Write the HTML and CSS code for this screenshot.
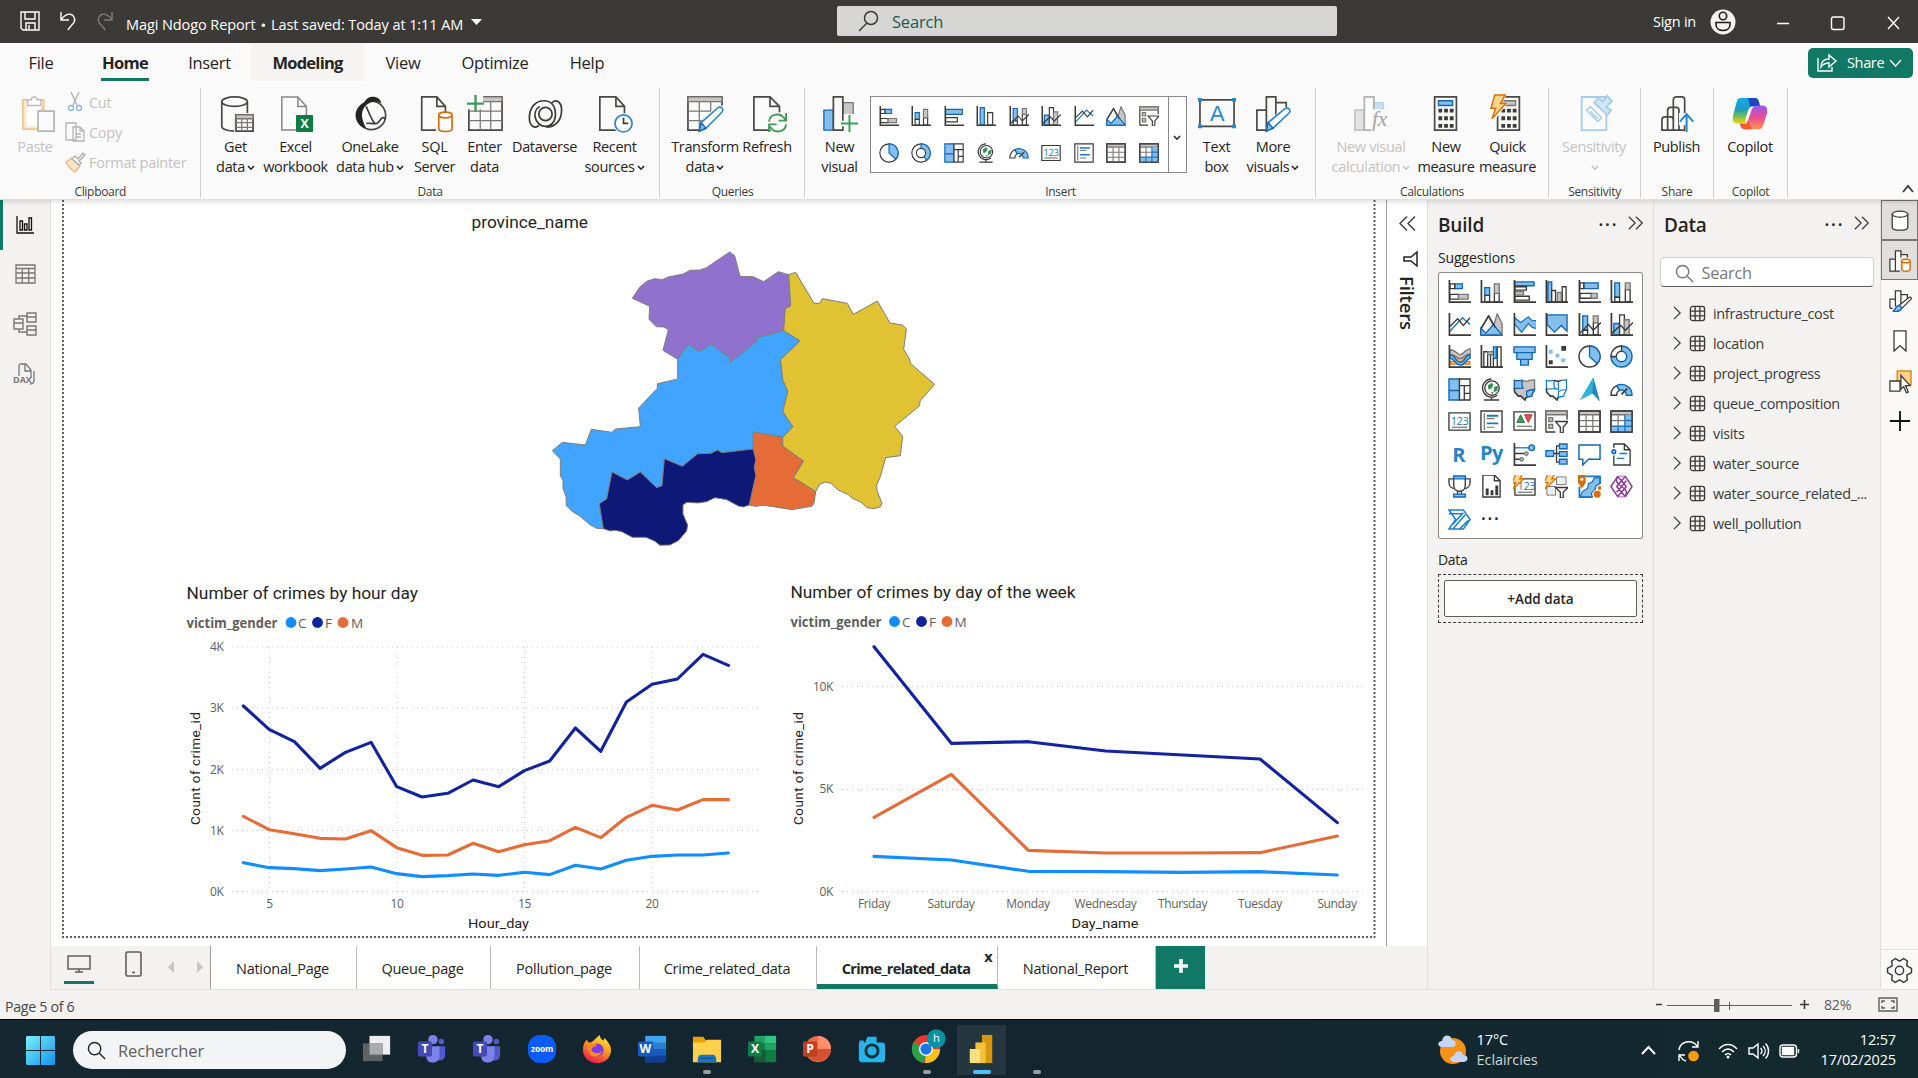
FILE: index.html
```html
<!DOCTYPE html>
<html lang="en">
<head>
<meta charset="utf-8">
<title>Magi Ndogo Report</title>
<link rel="stylesheet" href="styles.css">
</head>
<body>
<svg class="sprite" aria-hidden="true">
  <!-- visual gallery icons, 24 unit grid -->
  <symbol id="v-stackbar" viewBox="0 0 24 24"><path class="b" d="M7 4h8v5H7z"/><path class="w" d="M2 4h5v5H2zM2 15h9v5H2z"/><path class="g" d="M11 15h10v5H11z"/><path class="k2" d="M1.5 0v23H24"/></symbol>
  <symbol id="v-stackcol" viewBox="0 0 24 24"><path class="b" d="M5 8h5v8H5z"/><path class="w" d="M5 16h5v7H5zM15 14h5v9h-5z"/><path class="g" d="M15 4h5v10h-5z"/><path class="k2" d="M1.5 0v23H24"/></symbol>
  <symbol id="v-clubar" viewBox="0 0 24 24"><path class="b" d="M2 2h20v4H2z"/><path class="w" d="M2 7h12v3.500H2zM2 17h15v4H2z"/><path class="g" d="M2 12h9v3.500H2z"/><path class="k2" d="M1.5 0v23H24"/></symbol>
  <symbol id="v-clubar2" viewBox="0 0 24 24"><path class="b" d="M2 4h20v6H2z"/><path class="w" d="M2 14h14v5H2z"/><path class="k2" d="M1.5 0v23H24"/></symbol>
  <symbol id="v-clucol" viewBox="0 0 24 24"><path class="b" d="M3 2h4v21H3z"/><path class="w" d="M7 11h4v12H7zM18 7h4v16h-4z"/><path class="g" d="M13 13h4v10h-4z"/><path class="k2" d="M1.5 0v23H24"/></symbol>
  <symbol id="v-clucol2" viewBox="0 0 24 24"><path class="b" d="M5 2h5v21H5z"/><path class="w" d="M14 8h6v15h-6z"/><path class="k2" d="M1.5 0v23H24"/></symbol>
  <symbol id="v-100bar" viewBox="0 0 24 24"><path class="b" d="M6 3h15v6H6z"/><path class="w" d="M2 3h4v6H2zM2 14h12v5H2z"/><path class="g" d="M14 14h6v5h-6z"/><path class="k2" d="M1.5 0v23H24"/></symbol>
  <symbol id="v-100col" viewBox="0 0 24 24"><path class="b" d="M5 3h5v15H5z"/><path class="w" d="M5 18h5v5H5zM16 10h5v13h-5z"/><path class="g" d="M16 3h5v7h-5z"/><path class="k2" d="M1.5 0v23H24"/></symbol>
  <symbol id="v-line" viewBox="0 0 24 24"><path class="bl" d="M2 19 15 5l8 7"/><path class="k" d="m2 14 8-8 6 7 7-8"/><path class="k2" d="M1.5 0v23H24"/></symbol>
  <symbol id="v-area" viewBox="0 0 24 24"><path class="g" d="m18 1 5 10v12H11z"/><path class="w" d="M9 3 1 16v7h18z"/><path class="b" d="m1 16 5 5 8-9 9 11H1z"/><path class="k" d="M9 3 2 15M9 3l7 12"/></symbol>
  <symbol id="v-stackarea" viewBox="0 0 24 24"><path class="bs" d="m2 5 6 5 8-6 4 4h4v9l-4-2-4-4-7 9-7-8z"/><path class="b0" d="m2 5 6 5 8-6 4 4h4M2 12l7 8 7-9 4 4 4 1"/><path class="k2" d="M1.5 0v23H24"/></symbol>
  <symbol id="v-100area" viewBox="0 0 24 24"><path class="b" d="M2 2h21v17l-6-6-7 7-8-8z"/><path class="k2" d="M1.5 0v23H24"/></symbol>
  <symbol id="v-combo1" viewBox="0 0 24 24"><path class="b" d="M5 3h5v15H5z"/><path class="w" d="M5 18h5v5H5zM16 10h5v13h-5z"/><path class="g" d="M16 3h5v7h-5z"/><path class="k" d="m2 21 9-9 5 6 8-8"/><path class="k2" d="M1.5 0v23H24"/></symbol>
  <symbol id="v-combo2" viewBox="0 0 24 24"><path class="b" d="M4 11h6v12H4z"/><path class="w" d="M10 2h5v21h-5z"/><path class="g" d="M15 7h5v16h-5z"/><path class="k" d="m2 21 9-8 5 5 8-8"/><path class="k2" d="M1.5 0v23H24"/></symbol>
  <symbol id="v-ribbon" viewBox="0 0 24 24"><path class="o" d="M2 12h5l5 3 5-4h6v3h-5l-3 3h8v3H2v-3h6l-3-3H2z"/><path class="g" d="M2 5c7 0 7 5 11 5s4-6 11-6v5c-6 0-7 5-11 5S8 10 2 10z"/><path class="b" d="M2 10c5 0 6 8 11 8s5-8 10-8v4c-4 0-5 7-10 7S7 14 2 14z"/><path class="k2" d="M1.5 0v23H24"/></symbol>
  <symbol id="v-waterfall" viewBox="0 0 24 24"><path class="w" d="M4 7h4v16H4zM18 2h4v21h-4z"/><path class="g" d="M8 7h6v3H8z"/><path class="b" d="M14 2h3v12h-3z"/><path class="k" d="M11 10v13M14 14v9"/><path class="k2" d="M1.5 0v23H24"/></symbol>
  <symbol id="v-funnel" viewBox="0 0 24 24"><path class="b" d="M1 2h22v6H1zM4 8h16v7H4zM8 15h8v6H8z"/></symbol>
  <symbol id="v-scatter" viewBox="0 0 24 24"><path class="kd" d="M17 1h5v5h-5zM4 16h4v4H4z"/><path class="bs" d="M4 5h4v4H4zM11 9h4v4h-4zM17 14h4v4h-4z"/><path class="k2" d="M1.5 0v23H24"/></symbol>
  <symbol id="v-pie" viewBox="0 0 24 24"><circle class="w" cx="12" cy="12" r="11"/><path class="b" d="M12 1a11 11 0 0 1 8 18.500L12 12z"/></symbol>
  <symbol id="v-donut" viewBox="0 0 24 24"><path class="b" d="M12 1a11 11 0 1 1-11 11h5.500A5.500 5.500 0 1 0 12 6.500z"/><path class="w" d="M12 1A11 11 0 0 0 1 12h5.500A5.500 5.500 0 0 1 12 6.500z"/></symbol>
  <symbol id="v-donut2" viewBox="0 0 24 24"><circle class="w" cx="12" cy="12" r="11"/><path class="b" d="M12 1a11 11 0 0 1 7 19.500l-4-4.500A5.500 5.500 0 0 0 12 6.500z"/><circle class="w" cx="12" cy="12" r="5.500"/></symbol>
  <symbol id="v-treemap" viewBox="0 0 24 24"><path class="b" d="M1 1h11v22H1zM1 13h11"/><path class="w" d="M12 1h11v7H12zM12 8h5v15h-5zM17 8h6v8h-6zM17 16h6v7h-6z"/></symbol>
  <symbol id="v-map" viewBox="0 0 24 24"><circle class="w" cx="12.500" cy="10.500" r="7.500"/><path class="gn" d="M8 8l4-3 2 2-2 4-3 1zM15 9l4-1-1 5-4 2zM11 14l3 1-1 2z"/><path class="k" d="M12 1a9.500 9.500 0 1 0 6 17M12 20v3M4 23h16"/></symbol>
  <symbol id="v-filled" viewBox="0 0 24 24"><path class="g" d="M1.500 2.500c3 1 5 0 8 0 3 1 5 2 7 0l6-.500v10c-1 3-3 4-3 7l-5 1-2 3-4-4-4-1c-1-3-4-4-3-7z"/><path class="b" d="M1.500 2.500c3 1 5 0 8 0 0 3-1 5 1 8l-9 .500zM14 14c3-2 5-2 8.500-2-1 3-3 4-3 7l-5 1z"/><path class="k" d="M1.500 11v3c0 3 4 3 4 5l3 0 4 4 1-3"/></symbol>
  <symbol id="v-shape" viewBox="0 0 24 24"><path class="b0" fill="#fff" d="M1.500 2.500c3 1 5 0 8 0 3 1 5 2 7 0l6-.500v10c-1 3-3 4-3 7l-5 1-2 3-4-4-4-1c-1-3-4-4-3-7zM9.500 3c0 3-1 5 1 8l-9 .500M14 20v-6c3-2 5-2 8.500-2M10 11l4 1V3"/><path class="k" d="M1.500 11v3c0 3 4 3 4 5l3 0 4 4 1-3M9.500 2.500c3 1 5 2 7 0"/></symbol>
  <symbol id="v-azure" viewBox="0 0 24 24"><path d="M16-1 2 23l14-7z" fill="#32b0d8"/><path d="M16-1l7 26-8-9z" fill="#2287c7"/></symbol>
  <symbol id="v-gauge" viewBox="0 0 24 24"><path class="w" d="M1 18a11 11 0 0 1 6-10l3 5a5 5 0 0 0-3 5z"/><path class="b" d="M7 8a11 11 0 0 1 16 10h-6a5 5 0 0 0-7-5z"/><path class="k2" d="m12 17 6-6"/></symbol>
  <symbol id="v-card" viewBox="0 0 24 24"><path class="w" d="M1 3h22v18H1z"/><path class="gl" d="M4 18h16"/><text x="12" y="15.500" class="num">123</text></symbol>
  <symbol id="v-multirow" viewBox="0 0 24 24"><path class="w" d="M1 1h22v22H1z"/><path class="gl" d="M4.500 3v18M7 9h8M7 18h8"/><path class="bl2" d="M7 6h12M7 14h12"/></symbol>
  <symbol id="v-kpi" viewBox="0 0 24 24"><path class="w" d="M1 2h22v19H1z"/><path d="m4 13 4-8 4 8z" fill="#3f9c58" stroke="#2c7b43"/><path d="m12 5h8l-4 8z" fill="#e35252" stroke="#c03232"/><path class="gl" d="M4 17h16"/></symbol>
  <symbol id="v-slicer" viewBox="0 0 24 24"><path class="w" d="M1 1h22v22H1z"/><path class="g" d="M1 1h22v4H1zM4 8h4v4H4zM4 15h4v4H4z"/><path d="M10 10h15v15H11z" fill="#fff"/><path class="w" d="M11 12h13l-5 6v6h-3v-6z"/></symbol>
  <symbol id="v-table" viewBox="0 0 24 24"><path class="w" d="M1 1h22v22H1z"/><path class="g" d="M1 1h22v4H1z"/><path class="gl" d="M8.500 5v18M15.500 5v18M1 11h22M1 17h22"/><path class="k" d="M1 1h22v22H1z"/></symbol>
  <symbol id="v-matrix" viewBox="0 0 24 24"><path class="w" d="M1 1h22v22H1z"/><path class="g" d="M1 1h22v4H1z"/><path class="bs" d="M15.500 5H23v18H1v-6h14z"/><path class="bl" d="M8.500 16v7M15.500 5v18M15 11h8M1 17h22"/><path class="gl" d="M8.500 5v12M1 11h14"/><path class="k" d="M1 1h22v22H1z"/></symbol>
  <symbol id="v-r" viewBox="0 0 24 24"><text x="11" y="20" class="lang">R</text></symbol>
  <symbol id="v-py" viewBox="0 0 24 24"><text x="12" y="18" class="lang">Py</text></symbol>
  <symbol id="v-infl" viewBox="0 0 24 24"><path class="bl" d="M2 5h14"/><circle class="b" cx="19.500" cy="5" r="3"/><path class="k" d="M2 11h10M2 17h6"/><circle class="g" cx="14" cy="11" r="1.800"/><circle class="g" cx="9" cy="17" r="1.800"/><path class="k2" d="M1.500 0v23H24"/></symbol>
  <symbol id="v-decomp" viewBox="0 0 24 24"><path class="k" d="M9 11h6M16 3h-4v17h4"/><path class="b" d="M1 8h8v6H1zM15 1h8v5h-8zM15 9h8v5h-8zM15 17h8v5h-8z"/></symbol>
  <symbol id="v-qna" viewBox="0 0 24 24"><path d="M1 2h22v15H11l-6 6v-6H1z" fill="#fff" stroke="#1066b5" stroke-width="1.500"/></symbol>
  <symbol id="v-narr" viewBox="0 0 24 24"><path class="w" d="M4 1h11l6 6v16H4z"/><path class="k" d="M15 1v6h6"/><path class="bl" d="M10 11h8M7 16h8"/><circle cx="4" cy="9" r="4" fill="#fff"/><circle class="b" cx="4" cy="9" r="2"/></symbol>
  <symbol id="v-trophy" viewBox="0 0 24 24"><path class="w" d="M6 4H1v4c0 4 3 6 6 6l3 3v4h4v-4l3-3c3 0 6-2 6-6V4h-5"/><path class="w" d="M6 2h12v9c0 4-3 6-6 6s-6-2-6-6z"/><path class="b" d="M6 1h12v3H6zM6 20h12v3H6z"/></symbol>
  <symbol id="v-pagin" viewBox="0 0 24 24"><path class="w" d="M3 0h12l6 6v17H3z"/><path class="k" d="M15 0v6h6"/><path class="kd" d="M6 14h3v7H6zM11 16h3v5h-3zM16 11h3v10h-3z"/></symbol>
  <symbol id="v-cardnew" viewBox="0 0 24 24"><path class="w" d="M2 4h21v17H2z"/><path class="gl" d="M5 18h15"/><text x="14" y="16" class="num">123</text><path class="bolt" d="M3-1h7L7 4h4L0 15l3-7H-1z"/></symbol>
  <symbol id="v-slicernew" viewBox="0 0 24 24"><path d="M12 2h10v8H12zM2 12h9v9H2z" fill="#eee" stroke="#797775"/><path class="w" d="M11 13h13l-5 5v6h-3v-6z"/><path class="bolt" d="M3-1h7L7 4h4L0 15l3-7H-1z"/></symbol>
  <symbol id="v-arcgis" viewBox="0 0 24 24"><path d="M2 2h21v21H2z" fill="#fff"/><path d="M23 3h-6l-2 4-4 2-1 5-5 3-3 6h13l-1-4 4-4 1-4 4-2z" fill="#83beec" stroke="#1066b5" stroke-width="1.200"/><path class="bl2" d="M8 1.500h15v8M1.500 12v11H15"/><path d="M0 0h8v8l-4 6-4-6z" fill="#dd6b08"/><circle cx="4" cy="4.500" r="1.600" fill="#fff"/><circle cx="20" cy="20" r="4.200" fill="#dd6b08" stroke="#fff"/><circle cx="22.500" cy="13.500" r="2" fill="#dd6b08"/></symbol>
  <symbol id="v-papps" viewBox="0 0 24 24"><g fill="#fff" stroke="#8d3498" stroke-width="1.500" stroke-linejoin="round"><path d="M8 1.500h8L23 12l-7 10.500H8L1 12z"/><path d="m8 1.500 4 4.500 4-4.500M8 22.500l4-4.500 4 4.500M12 6l-5 6 5 6 5-6zM8 1.500C6 6 6 8 12 12M16 22.500c2-4.500 2-6.500-4-10.500M17 6l-10 12"/></g></symbol>
  <symbol id="v-pauto" viewBox="0 0 24 24"><path d="M1 2h15l7 10-7 10H1l7-10zM1 6h13M5 17 16 5M5 22 18 7M12 22l9-9" fill="#fff" stroke="#1b7fd4" stroke-width="1.600"/></symbol>
  <symbol id="i-table" viewBox="0 0 18 18"><rect class="k" x="1.500" y="1.500" width="15" height="15" rx="2.500"/><path class="k" d="M6.500 1.500v15M11.500 1.500v15M1.500 6.500h15M1.500 11.500h15"/></symbol>
  <symbol id="i-chev" viewBox="0 0 10 16"><path class="k" d="m1 1 7 7-7 7"/></symbol>
  <symbol id="i-dbl" viewBox="0 0 18 16"><path class="k" d="m1 1 7 7-7 7M9 1l7 7-7 7"/></symbol>
  <symbol id="i-down" viewBox="0 0 8 6"><path d="m1 1 3 3.200L7 1" fill="none" stroke="currentColor" stroke-width="1.600"/></symbol>
  <symbol id="i-lens" viewBox="0 0 20 20"><circle cx="8" cy="8" r="6.500" fill="none" stroke="currentColor" stroke-width="1.500"/><path d="m13 13 6 6" stroke="currentColor" stroke-width="1.500"/></symbol>
  <symbol id="t-teams" viewBox="0 0 32 32"><circle cx="17" cy="6" r="5" fill="#7b83eb"/><circle cx="26" cy="8" r="3" fill="#5059c9"/><path d="M22 13h8v9c0 5-4 7-8 6z" fill="#5059c9"/><path d="M10 13h14v11c0 8-13 9-14 1z" fill="#7b83eb"/><rect x="1" y="8" width="15" height="16" rx="1.500" fill="#4349b5"/><text class="app" x="8.500" y="20.500">T</text></symbol>
</svg>

<header class="titlebar">
  <div class="quick">
    <svg width="20" height="20" viewBox="0 0 20 20" class="wh"><path d="M1 1h18v18H3l-2-2zM5 1v7h10V1M6 19v-7h9v7M9 14v4"/></svg>
    <svg width="18" height="20" viewBox="0 0 18 20" class="wh"><path d="M2 1v8h8M2 9c4-6 10-8 13-3 3 6-4 8-6 13"/></svg>
    <svg width="18" height="20" viewBox="0 0 18 20" class="wh dim"><path d="M16 1v8H8M16 9C12 3 6 1 3 6c-3 6 4 8 6 13"/></svg>
  </div>
  <div class="doc">Magi Ndogo Report<i>•</i>Last saved: Today at 1:11 AM<svg width="11" height="6" viewBox="0 0 11 6"><path d="M0 0h11L5.500 6z" fill="#fff"/></svg></div>
  <div class="topsearch"><svg width="22" height="22" viewBox="0 0 22 22"><circle cx="13" cy="8" r="6.500" fill="none" stroke="#3b3a39" stroke-width="1.500"/><path d="m9 13-8 8" stroke="#3b3a39" stroke-width="1.500"/></svg><span>Search</span></div>
  <div class="signin">Sign in</div>
  <svg class="avatar" width="26" height="26" viewBox="0 0 26 26"><circle cx="13" cy="13" r="12.500" fill="#f3f2f1"/><g fill="none" stroke="#201f1e" stroke-width="1.600"><circle cx="13" cy="7" r="3.700"/><path d="M6 13.500h14v2c0 8-14 8-14 0z"/></g></svg>
  <svg class="winbtns wh" width="124" height="16" viewBox="0 0 124 16"><path d="M1 8.500h12M112 2l11 12M123 2l-11 12"/><rect x="55.500" y="2" width="12.500" height="12.500" rx="2"/></svg>
</header>

<div class="ribbon">
  <nav class="menu">
    <a class="m-file">File</a><a class="m-home on"><b>Home</b></a><a class="m-insert">Insert</a><a class="m-model"><b>Modeling</b></a><a class="m-view">View</a><a class="m-opt">Optimize</a><a class="m-help">Help</a>
    <button class="share"><svg width="20" height="19" viewBox="0 0 20 19" class="wh"><path d="M1 5v13h14v-4M4 14c0-6 4-8 8-8V2l7 6-7 6v-4c-4 0-6 1-8 4z"/></svg><span>Share</span><svg width="13" height="8" viewBox="0 0 13 8" class="wh"><path d="m1 1 5.500 6L12 1"/></svg></button>
  </nav>
  <div class="groups">
    <section class="grp clip dis">
      <div class="btns">
        <div class="btn" style="width:50px"><svg class="ic" viewBox="0 0 38 38"><path d="M3 4h22v10h-6v21H3z" fill="#fbe9cf" stroke="#eec48f" stroke-width="1.800"/><path d="M7 8h15v24H7z" fill="#fff"/><path d="M8 4h4c0-4 6-4 6 0h4v6H8z" fill="#fff" stroke="#bbb" stroke-width="1.500"/><path d="M19 16h17v21H19z" fill="#fafafa" stroke="#b5b5b5" stroke-width="1.800"/></svg><span>Paste</span></div>
        <div class="cliplist">
          <div><svg width="14" height="20" viewBox="0 0 14 20" fill="none"><path d="m3 0 6 13M11 0 5 13" stroke="#b0aeac" stroke-width="1.300"/><circle cx="3" cy="16" r="2.500" stroke="#8ab8dc" stroke-width="1.300"/><circle cx="11" cy="16" r="2.500" stroke="#8ab8dc" stroke-width="1.300"/></svg><span>Cut</span></div>
          <div><svg width="20" height="20" viewBox="0 0 20 20" fill="#fafafa" stroke="#b5b5b5" stroke-width="1.300"><path d="M1 1h10v17H1zM8 5h7l4 4v10H8zM15 5v4h4M11 12h5M11 15h5"/></svg><span>Copy</span></div>
          <div><svg width="20" height="20" viewBox="0 0 20 20" stroke-width="1.400"><path d="m1 10 6-4 8 8-5 6c-3-2-7-5-9-10z" fill="#fbe3c5" stroke="#ecb98a"/><path d="m7 7 3-3 3 3 5-6 2 2-6 6 2 2-2 2z" fill="#fff" stroke="#b0aeac"/></svg><span>Format painter</span></div>
        </div>
      </div><h6>Clipboard</h6>
    </section>
    <section class="grp data">
      <div class="btns">
        <div class="btn" style="width:50px"><svg class="ic" viewBox="0 0 38 38"><path class="w2" d="M4 6v26c0 3 6 5 14 5V19h13V6"/><ellipse class="w2" cx="17.500" cy="6" rx="13.500" ry="5"/><path d="M17 18h22v20H17z" fill="#fafafa"/><path class="w2" d="M19 20h18v17H19z"/><path class="g" d="M19 20h18v4H19z"/><path class="gl" d="M25 24v13M31 24v13M19 28h18M19 33h18"/></svg><span>Get<br>data<svg class="dn"><use href="#i-down"/></svg></span></div>
        <div class="btn" style="width:70px"><svg class="ic" viewBox="0 0 38 38"><path class="w3" d="M4 1h17l9 10v25H4zM21 1v10h9"/><rect x="19" y="20" width="18" height="18" rx="1" fill="#107c41"/><text x="28" y="34" class="app">X</text></svg><span>Excel<br>workbook</span></div>
        <div class="btn" style="width:79px"><svg class="ic" viewBox="0 0 38 38"><circle class="w2" cx="20.500" cy="20.500" r="15"/><path d="M13 7c3-9 17-8 18 1-6-4-13-2-18 4-4 6-3 13 2 22C2 31-1 13 13 7z" fill="#252423"/><path class="k2" d="M15 11c3 7 6 15 9 18M35 24c-4-4-5 3-9 5-4 1-8-1-11 0"/></svg><span>OneLake<br>data hub<svg class="dn"><use href="#i-down"/></svg></span></div>
        <div class="btn" style="width:50px"><svg class="ic" viewBox="0 0 38 38"><path class="w2" d="M5 1h16l9 10v25H5zM21 1v10h9"/><path d="M20 17h19v22H20z" fill="#fafafa"/><path d="M23 20v15c0 3 14 3 14 0V20" fill="#fff" stroke="#dd6b08" stroke-width="1.800"/><ellipse cx="30" cy="20" rx="7" ry="3" fill="#fff" stroke="#dd6b08" stroke-width="1.800"/></svg><span>SQL<br>Server</span></div>
        <div class="btn" style="width:50px"><svg class="ic" viewBox="0 0 38 38"><path class="w2" d="M2 1h35v35H2z"/><path class="g" d="M2 1h35v5H2z"/><path class="gl" d="M14 6v30M25 6v30M2 16h35M2 26h35"/><path d="M0-1h17v15H0z" fill="#fafafa"/><path d="M9-1v18M0 8h18" stroke="#3f9c58" stroke-width="2.500"/></svg><span>Enter<br>data</span></div>
        <div class="btn" style="width:70px"><svg class="ic" viewBox="0 0 38 38"><circle class="k2" cx="19.500" cy="19" r="7"/><path class="k2" d="M12.500 31c-4 4-10 1-10-8C2.500 12 9 5 18 5c8 0 12 6 12 14 0 9-5 13-10.500 13-6 0-10-5-11-10-.500-4 1-9 5-11M26.500 7c4-4 10-1 10 8 0 11-7 18-16 18"/></svg><span>Dataverse</span></div>
        <div class="btn" style="width:70px"><svg class="ic" viewBox="0 0 38 38"><path class="w2" d="M3 1h17l9 10v25H3zM20 1v10h9"/><circle cx="28" cy="29" r="11" fill="#fafafa"/><circle cx="28" cy="29" r="9" fill="#fff" stroke="#2b88c8" stroke-width="1.800"/><path class="k2" d="M28 23v6h5"/></svg><span>Recent<br>sources<svg class="dn"><use href="#i-down"/></svg></span></div>
      </div><h6>Data</h6>
    </section>
    <section class="grp queries">
      <div class="btns">
        <div class="btn" style="width:69px"><svg class="ic" viewBox="0 0 38 38"><path class="w2" d="M1 1h36v35H1z"/><path class="g" d="M1 1h36v5H1z"/><path class="gl" d="M13 6v30M25 6v30M1 16h36M1 26h36"/><path d="m12 39 3-12 16-17h9v29z" fill="#fafafa"/><path d="m13 37 2-9 18-16c4-1 6 2 4 5L20 34z" fill="#fff" stroke="#2b88c8" stroke-width="1.700"/><path class="b" d="m13 37 2-9 5 6z"/></svg><span>Transform<br>data<svg class="dn"><use href="#i-down"/></svg></span></div>
        <div class="btn" style="width:55px"><svg class="ic nudge" viewBox="0 0 38 38"><path class="w2" d="M2 1h17l10 10v25H2zM19 1v10h10"/><circle cx="27" cy="28" r="11" fill="#fafafa"/><path d="M18 27c1-9 13-10 17-2M36 18v8h-8M36 30c-1 9-13 10-17 2M18 38v-8h8" fill="none" stroke="#3f9c58" stroke-width="2"/></svg><span>Refresh</span></div>
      </div><h6>Queries</h6>
    </section>
    <section class="grp insert">
      <div class="btns">
        <div class="btn" style="width:50px"><svg class="ic" viewBox="0 0 38 38"><path class="b" d="M2 15h10v21H2z"/><path class="g" d="M22 7h11v29H22z"/><path class="w2" d="M12 1h10v35H12z"/><path d="M18 26h5v-7h12v7h5v13H23v-7h-5z" fill="#fafafa"/><path d="M29 20v18M20 29h18" stroke="#3f9c58" stroke-width="2"/></svg><span>New<br>visual</span></div>
        <div class="gallery">
          <div class="gal-grid">
            <svg><use href="#v-stackbar"/></svg><svg><use href="#v-stackcol"/></svg><svg><use href="#v-clubar2"/></svg><svg><use href="#v-clucol2"/></svg><svg><use href="#v-combo1"/></svg><svg><use href="#v-combo2"/></svg><svg><use href="#v-line"/></svg><svg><use href="#v-area"/></svg><svg><use href="#v-slicer"/></svg>
            <svg><use href="#v-pie"/></svg><svg><use href="#v-donut2"/></svg><svg><use href="#v-treemap"/></svg><svg><use href="#v-map"/></svg><svg><use href="#v-gauge"/></svg><svg><use href="#v-card"/></svg><svg><use href="#v-multirow"/></svg><svg><use href="#v-table"/></svg><svg><use href="#v-matrix"/></svg>
          </div>
          <div class="gal-more"><svg class="dn"><use href="#i-down"/></svg></div>
        </div>
        <div class="btn" style="width:50px"><svg class="ic" viewBox="0 0 38 38"><path class="w2" d="M1 4h36v28H1z"/><text x="19" y="26" class="bigA">A</text><path d="M-1 2h4v4h-4zM35 2h4v4h-4zM-1 30h4v4h-4zM35 30h4v4h-4z" fill="#1e88d2"/></svg><span>Text<br>box</span></div>
        <div class="btn" style="width:63px"><svg class="ic" viewBox="0 0 38 38"><path class="w2" d="M2 15h10v21H2zM22 7h11v29H22zM12 1h10v35H12z"/><path d="m11 39 3-12 16-15h9v27z" fill="#fafafa"/><path d="m12 37 2-9 18-15c4-1 6 2 4 5L19 34z" fill="#fff" stroke="#2b88c8" stroke-width="1.700"/><path class="b" d="m12 37 2-9 5 6z"/></svg><span>More<br>visuals<svg class="dn"><use href="#i-down"/></svg></span></div>
      </div><h6>Insert</h6>
    </section>
    <section class="grp calc">
      <div class="btns">
        <div class="btn dis" style="width:89px"><svg class="ic" viewBox="0 0 38 38"><path d="M2 15h10v21H2z" fill="#e3e2e1" stroke="#c4c4c4" stroke-width="1.800"/><path d="M22 7h10v10H22z" fill="#c5e0f5" stroke="#a5cdea"/><path d="M12 1h10v35H12z" fill="#fff" stroke="#b0b0b0" stroke-width="1.800"/><path d="M19 14h19v24H19z" fill="#fafafa"/><text x="28" y="32" class="fx">fx</text></svg><span>New visual<br>calculation<svg class="dn"><use href="#i-down"/></svg></span></div>
        <div class="btn" style="width:61px"><svg class="ic" viewBox="0 0 38 38"><path class="w2" d="M7 1h23v35H7z"/><path class="b" d="M11 5h15v5H11z"/><path d="M11 15.500h16M11 23.500h16M11 31.500h16" stroke="#3b3a39" stroke-width="4" stroke-dasharray="4 2"/></svg><span>New<br>measure</span></div>
        <div class="btn" style="width:62px"><svg class="ic" viewBox="0 0 38 38"><path class="w2" d="M8 1h23v35H8z"/><path class="g" d="M12 5h15v5H12z"/><path d="M12 15.500h16M12 23.500h16M12 31.500h16" stroke="#3b3a39" stroke-width="4" stroke-dasharray="4 2"/><path d="M4-2h14l-5 9h6L3 28l4-14H-1z" fill="#fafafa"/><path d="M5-1h11l-5 9h6L2 24l4-11H1z" fill="#fbd68a" stroke="#dd6b08" stroke-width="1.500"/></svg><span>Quick<br>measure</span></div>
      </div><h6>Calculations</h6>
    </section>
    <section class="grp sens">
      <div class="btns"><div class="btn dis" style="width:81px"><svg class="ic" viewBox="0 0 38 38"><path d="M6 1h26v35H6z" fill="#fafafa" stroke="#a5cdea" stroke-width="2"/><path d="M11 15 15 11 27 23 23 27zM15 16l8 8" fill="#fafafa" stroke="#a5cdea" stroke-width="1.500"/><path d="m19 7 14 13 4-5-5-3 6-7-5-5-5 6-4-4z" fill="#cfe6f7" stroke="#a5cdea" stroke-width="2"/></svg><span>Sensitivity<br><svg class="dn"><use href="#i-down"/></svg></span></div></div><h6>Sensitivity</h6>
    </section>
    <section class="grp shr">
      <div class="btns"><div class="btn" style="width:60px"><svg class="ic nudge2" viewBox="0 0 38 38"><path class="w2" d="M13 36V4c0-3 3-3 3-3h6c3 0 3 3 3 3v32zM7 36V15c0-3 3-3 3-3h6c3 0 3 3 3 3v21zM1 36V25c0-3 3-3 3-3h6c3 0 3 3 3 3v11z"/><path d="M19 18h16v22h-9v-9h-7z" fill="#fafafa"/><path d="M27 38V19M20 27l7-8 7 8" fill="none" stroke="#2b88c8" stroke-width="2.200"/></svg><span>Publish</span></div></div><h6>Share</h6>
    </section>
    <section class="grp cop">
      <div class="btns"><div class="btn" style="width:61px"><svg class="ic" viewBox="0 0 38 38"><defs><linearGradient id="ca" x2="0" y2="1"><stop offset="0" stop-color="#19a8ec"/><stop offset=".45" stop-color="#1c9bc0"/><stop offset=".75" stop-color="#7fc14a"/><stop offset="1" stop-color="#f2d313"/></linearGradient><linearGradient id="cb" x2="0" y2="1"><stop offset="0" stop-color="#9a55ea"/><stop offset=".5" stop-color="#ec4c91"/><stop offset="1" stop-color="#fb9352"/></linearGradient></defs><path d="M9 2h16l-8 23c-1 3-3 4-6 4H6c-4 0-6-3-5-8L5 6c1-3 2-4 4-4z" fill="url(#ca)"/><path d="M17 2h8c3 0 3 3 5 9h-5c-3 0-4 1-5 4z" fill="#1a48c4"/><path d="M29 35H13l8-21c1-3 3-4 6-4h5c4 0 6 3 5 8l-4 13c-1 3-2 4-4 4z" fill="url(#cb)"/><path d="M21 35h-8c-3 0-4-3-5-6h4c3 0 4-1 5-4z" fill="#f05a35"/><path d="M21 11h4c-3 0-4 2-5 5l-3 9c-1 3-3 4-5 4h4c-4-1 0-10 1-14 1-2 2-4 4-4z" fill="#fff"/></svg><span>Copilot</span></div></div><h6>Copilot</h6>
    </section>
    <svg class="collapse" width="12" height="8" viewBox="0 0 12 8"><path class="k2" d="m1 7 5-6 5 6"/></svg>
  </div>
</div>

<main class="work">
  <nav class="rail">
    <div class="on"><svg width="18" height="18" viewBox="0 0 18 18" fill="none" stroke="#111" stroke-width="1.300"><path d="M1 0v17h17M4 5h2.500v9H4zM8.500 8H11v6H8.500zM13 2h2.500v12H13z"/></svg></div>
    <div><svg width="21" height="20" viewBox="0 0 21 20" fill="none" stroke="#797775" stroke-width="1.300"><path d="M1 1h19v18H1zM1 4.500h19M1 9h19M1 14h19M7.300 4.500V19M13.700 4.500V19"/></svg></div>
    <div><svg width="24" height="24" viewBox="0 0 24 24" fill="none" stroke="#797775" stroke-width="1.400"><path d="M1 7h9v10H1zM1 11h9M14 1h9v9h-9zM14 5h9M14 14h9v9h-9zM14 18h9M6 7V4h8M6 17v3h8"/></svg></div>
    <div><svg width="23" height="22" viewBox="0 0 23 22" fill="none" stroke="#797775" stroke-width="1.300"><path d="M6 13V3c0-2 1-2 2-2h5l5 6v8M12 1v7h6M21 8v9c0 3-2 4-4 4"/><text x="0" y="20" class="dax" stroke="none">DAX</text></svg></div>
  </nav>
  <div class="center">
    <div class="upper">
      <div class="canvas">
        <svg class="report" width="1335" height="746" viewBox="51 200 1335 746">
          <g class="frame"><path d="M63 200v738M1374.500 200v738M62 937h1313"/></g>
          <text class="din" x="471.500" y="228" textLength="116.500" lengthAdjust="spacingAndGlyphs">province_name</text>
          <g class="map" transform="translate(540 230) scale(.33333)">
            <polygon fill="#9071ce" points="277,205 298,173 320,154 344,146 367,149 385,141 430,132 450,121 480,120 500,113 520,99 569,66 584,77 600,139 640,140 671,155 715,125 746,134 752,228 736,236 731,302 649,323 649,335 569,398 569,383 512,342 478,365 444,342 413,388 369,361 385,299 372,291 349,290 327,268 329,229"/>
            <polygon fill="#e0c233" points="746,134 767,127 822,220 838,220 847,206 922,220 940,253 1012,213 1050,279 1088,285 1099,297 1091,358 1108,386 1112,401 1184,463 1140,513 1139,527 1064,589 1088,619 1081,677 1037,683 1021,740 1010,765 1011,782 1026,820 1020,831 1000,836 980,832 965,818 937,804 925,794 893,779 873,760 855,756 838,764 827,785 760,743 790,693 728,649 728,622 758,590 728,545 743,484 728,450 721,389 780,333 731,302 736,236 752,228"/>
            <polygon fill="#41a4ff" points="413,388 444,342 478,365 512,342 569,383 569,398 649,335 649,323 731,302 780,333 721,389 728,450 743,484 728,545 758,590 728,622 640,606 640,657 545,668 533,660 513,670 473,671 427,709 373,686 366,767 350,773 301,726 262,750 216,726 200,807 178,821 190,896 170,895 150,884 120,859 95,843 79,827 78,800 69,775 69,750 61,738 61,687 37,662 67,637 136,645 154,598 216,607 226,597 301,590 296,534 352,475 352,461 413,447"/>
            <polygon fill="#0d1877" points="216,726 262,750 301,726 350,773 366,767 373,686 427,709 473,671 513,670 533,660 545,668 640,657 648,690 643,712 648,736 628,825 610,831 595,828 560,809 525,803 500,815 475,819 440,817 429,825 429,852 443,885 440,903 415,932 390,945 360,946 345,934 318,922 277,922 245,905 225,901 210,903 190,896 178,821 200,807"/>
            <polygon fill="#e66c37" points="640,606 728,622 728,649 790,693 760,743 827,785 822,820 815,829 755,839 700,830 670,826 645,829 628,825 648,736 643,712 648,690 640,657"/>
          </g>

          <!-- crimes by hour -->
          <text class="din" x="186.500" y="599" textLength="231.500" lengthAdjust="spacingAndGlyphs">Number of crimes by hour day</text>
          <g class="legend"><text class="lt" x="186.500" y="628" textLength="91" lengthAdjust="spacingAndGlyphs">victim_gender</text><circle cx="291" cy="622.500" r="5.400" fill="#118dff"/><text x="298" y="628">C</text><circle cx="317.500" cy="622.500" r="5.400" fill="#12239e"/><text x="325" y="628">F</text><circle cx="343" cy="622.500" r="5.400" fill="#e66c37"/><text x="351" y="628">M</text></g>
          <path class="grid" d="M232 647h529M232 708h529M232 769.500h529M232 830.500h529M232 891.500h529M269.500 647v245M397 647v245M524.500 647v245M652 647v245"/>
          <g class="ax end"><text x="223.500" y="651">4K</text><text x="223.500" y="712">3K</text><text x="223.500" y="773.500">2K</text><text x="223.500" y="835">1K</text><text x="223.500" y="896">0K</text></g>
          <g class="ax mid"><text x="269.500" y="908">5</text><text x="397" y="908">10</text><text x="524.500" y="908">15</text><text x="652" y="908">20</text></g>
          <text class="dinx" x="498.500" y="928" textLength="61" lengthAdjust="spacingAndGlyphs">Hour_day</text>
          <text class="dinx" transform="translate(199.500 768.500) rotate(-90)" textLength="113" text-anchor="middle" x="0" y="0">Count of crime_id</text>
          <g class="series" transform="translate(243.400 570) scale(.33333)">
            <polyline stroke="#118dff" points="0,878 77,893 153,896 230,902 306,897 383,891 460,911 536,920 613,917 689,912 766,916 843,907 919,914 996,886 1072,897 1149,871 1226,859 1302,855 1379,855 1455,849"/>
            <polyline stroke="#12239e" points="0,408 77,478 153,515 230,595 306,547 383,517 460,650 536,681 613,670 689,630 766,650 843,602 919,573 996,474 1072,544 1149,396 1226,343 1302,327 1379,253 1455,286"/>
            <polyline stroke="#e66c37" points="0,739 77,779 153,791 230,805 306,807 383,782 460,833 536,856 613,855 689,820 766,845 843,824 919,812 996,772 1072,803 1149,742 1226,706 1302,720 1379,689 1455,689"/>
          </g>

          <!-- crimes by weekday -->
          <text class="din" x="790.500" y="598" textLength="285" lengthAdjust="spacingAndGlyphs">Number of crimes by day of the week</text>
          <g class="legend"><text class="lt" x="790.500" y="627" textLength="91" lengthAdjust="spacingAndGlyphs">victim_gender</text><circle cx="894.500" cy="621.500" r="5.400" fill="#118dff"/><text x="902" y="627">C</text><circle cx="921.500" cy="621.500" r="5.400" fill="#12239e"/><text x="929" y="627">F</text><circle cx="947" cy="621.500" r="5.400" fill="#e66c37"/><text x="954.500" y="627">M</text></g>
          <path class="grid" d="M842 686.500h524M842 789.500h524M842 891.500h524"/>
          <g class="ax end"><text x="833" y="691">10K</text><text x="833" y="793">5K</text><text x="833" y="896">0K</text></g>
          <g class="ax mid"><text x="874" y="908">Friday</text><text x="951" y="908">Saturday</text><text x="1028" y="908">Monday</text><text x="1105.500" y="908">Wednesday</text><text x="1182.500" y="908">Thursday</text><text x="1260" y="908">Tuesday</text><text x="1337" y="908">Sunday</text></g>
          <text class="dinx" x="1105" y="928" textLength="67" lengthAdjust="spacingAndGlyphs">Day_name</text>
          <text class="dinx" transform="translate(803 768.500) rotate(-90)" textLength="113" text-anchor="middle" x="0" y="0">Count of crime_id</text>
          <g class="series" transform="translate(874 570) scale(.33333)">
            <polyline stroke="#118dff" points="0,859 232,870 463,904 695,905 927,907 1158,905 1390,915"/>
            <polyline stroke="#12239e" points="0,230 232,520 463,515 695,543 927,555 1158,567 1390,758"/>
            <polyline stroke="#e66c37" points="0,742 232,613 463,841 695,849 927,849 1158,848 1390,798"/>
          </g>
        </svg>
      </div>
      <aside class="filters">
        <svg width="18" height="17" viewBox="0 0 18 16" class="flip"><use href="#i-dbl"/></svg>
        <svg width="15" height="16" viewBox="0 0 15 16"><path d="M14 1v14L8 10H1V6h7z" fill="none" stroke="#252423" stroke-width="1.500"/></svg>
        <span>Filters</span>
      </aside>
    </div>
    <div class="pages">
      <div class="viewctl">
        <div class="desk"><svg width="24" height="18" viewBox="0 0 24 18" fill="none" stroke="#605e5c" stroke-width="1.500"><path d="M1 1h22v13H1zM12 14v3M8 17h8"/></svg></div>
        <svg class="phone" width="17" height="26" viewBox="0 0 17 26" fill="none" stroke="#605e5c" stroke-width="1.600"><rect x="1" y="1" width="15" height="24" rx="1.500"/><path d="M7 21.500h3"/></svg>
        <svg class="pn" width="35" height="12" viewBox="0 0 35 12"><path d="M6 0v12L0 6zM29 0v12l6-6z" fill="#c8c6c4"/></svg>
      </div>
      <div class="pg" style="width:146px">National_Page</div>
      <div class="pg" style="width:134px">Queue_page</div>
      <div class="pg" style="width:149px">Pollution_page</div>
      <div class="pg" style="width:177px">Crime_related_data</div>
      <div class="pg on" style="width:181px">Crime_related_data<i>x</i></div>
      <div class="pg" style="width:158px">National_Report</div>
      <div class="add"><svg width="14" height="14" viewBox="0 0 14 14"><path d="M7 0v14M0 7h14" stroke="#fff" stroke-width="3.500"/></svg></div>
    </div>
  </div>
  <aside class="build">
    <div class="phead"><h2>Build</h2><b class="dots">···</b><svg width="16" height="16"><use href="#i-dbl"/></svg></div>
    <p class="sug">Suggestions</p>
    <div class="visuals">
      <svg><use href="#v-stackbar"/></svg><svg><use href="#v-stackcol"/></svg><svg><use href="#v-clubar"/></svg><svg><use href="#v-clucol"/></svg><svg><use href="#v-100bar"/></svg><svg><use href="#v-100col"/></svg>
      <svg><use href="#v-line"/></svg><svg><use href="#v-area"/></svg><svg><use href="#v-stackarea"/></svg><svg><use href="#v-100area"/></svg><svg><use href="#v-combo1"/></svg><svg><use href="#v-combo2"/></svg>
      <svg><use href="#v-ribbon"/></svg><svg><use href="#v-waterfall"/></svg><svg><use href="#v-funnel"/></svg><svg><use href="#v-scatter"/></svg><svg><use href="#v-pie"/></svg><svg><use href="#v-donut"/></svg>
      <svg><use href="#v-treemap"/></svg><svg><use href="#v-map"/></svg><svg><use href="#v-filled"/></svg><svg><use href="#v-shape"/></svg><svg><use href="#v-azure"/></svg><svg><use href="#v-gauge"/></svg>
      <svg><use href="#v-card"/></svg><svg><use href="#v-multirow"/></svg><svg><use href="#v-kpi"/></svg><svg><use href="#v-slicer"/></svg><svg><use href="#v-table"/></svg><svg><use href="#v-matrix"/></svg>
      <svg><use href="#v-r"/></svg><svg><use href="#v-py"/></svg><svg><use href="#v-infl"/></svg><svg><use href="#v-decomp"/></svg><svg><use href="#v-qna"/></svg><svg><use href="#v-narr"/></svg>
      <svg><use href="#v-trophy"/></svg><svg><use href="#v-pagin"/></svg><svg><use href="#v-cardnew"/></svg><svg><use href="#v-slicernew"/></svg><svg><use href="#v-arcgis"/></svg><svg><use href="#v-papps"/></svg>
      <svg><use href="#v-pauto"/></svg><b class="dots">···</b>
    </div>
    <p class="dlabel">Data</p>
    <div class="drop"><button>+Add data</button></div>
  </aside>
  <aside class="fields">
    <div class="phead"><h2>Data</h2><b class="dots">···</b><svg width="16" height="16"><use href="#i-dbl"/></svg></div>
    <div class="fsearch"><svg width="19" height="19"><use href="#i-lens"/></svg>Search</div>
    <ul>
      <li><svg class="c"><use href="#i-chev"/></svg><svg class="t"><use href="#i-table"/></svg>infrastructure_cost</li>
      <li><svg class="c"><use href="#i-chev"/></svg><svg class="t"><use href="#i-table"/></svg>location</li>
      <li><svg class="c"><use href="#i-chev"/></svg><svg class="t"><use href="#i-table"/></svg>project_progress</li>
      <li><svg class="c"><use href="#i-chev"/></svg><svg class="t"><use href="#i-table"/></svg>queue_composition</li>
      <li><svg class="c"><use href="#i-chev"/></svg><svg class="t"><use href="#i-table"/></svg>visits</li>
      <li><svg class="c"><use href="#i-chev"/></svg><svg class="t"><use href="#i-table"/></svg>water_source</li>
      <li><svg class="c"><use href="#i-chev"/></svg><svg class="t"><use href="#i-table"/></svg>water_source_related_...</li>
      <li><svg class="c"><use href="#i-chev"/></svg><svg class="t"><use href="#i-table"/></svg>well_pollution</li>
    </ul>
  </aside>
  <nav class="panes">
    <div class="on"><svg viewBox="0 0 24 24"><path class="w" d="M3.500 4v15c0 4 17 4 17 0V4"/><ellipse class="w" cx="12" cy="4.500" rx="8.500" ry="3.300"/></svg></div>
    <div class="on"><svg viewBox="0 0 24 24"><path class="w" d="M1 10h6v13H1zM13 5h7v18h-7zM7 1h6v22H7z"/><path d="M12 8h12v16H12z" fill="#e1dfdd"/><path d="M14 12v9c0 3 9 3 9 0v-9" fill="#fff" stroke="#dd6b08" stroke-width="1.600"/><ellipse cx="18.500" cy="12" rx="4.500" ry="2" fill="#fff" stroke="#dd6b08" stroke-width="1.600"/></svg></div>
    <div><svg viewBox="0 0 24 24"><path class="w" d="M1 20V10h6M7 18V1h6v15M13 5h7v4M1 20h3"/><path class="w" d="m11 17 11-9c2-1 3 1 2 2L14 20z"/><path class="b" d="M4 23c4-1 3-7 7-6s4 8-7 6z"/></svg></div>
    <div><svg viewBox="0 0 24 24"><path class="w" d="M5.500 1h13v22L12 17l-6.500 6z"/></svg></div>
    <div><svg viewBox="0 0 24 24"><path d="M9 1h15v15H9z" fill="#fbd68a" stroke="#dd8a18" stroke-width="1.600"/><path class="w" d="M1 12h11v11H1z"/><path class="w" d="m13 6 10 11h-5l3 7-2 1-3-7-3 3z"/></svg></div>
    <div><svg viewBox="0 0 24 24"><path d="M12 1v22M1 12h22" stroke="#111" stroke-width="2"/></svg></div>
    <div class="gear"><svg viewBox="0 0 24 24"><path class="w" stroke-linejoin="round" d="M8 .500 12 3l4-2.500L19.500 3l-.500 4.500 4.500 2.500v4L19 16.500l.500 4.500-3.500 2.500L12 21l-4 2.500L4.500 21l.500-4.500L.500 14v-4L5 7.500 4.500 3z"/><circle class="w" cx="12" cy="12" r="4"/></svg></div>
  </nav>
</main>

<footer class="status">
  <span class="pgno">Page 5 of 6</span>
  <svg width="160" height="16" viewBox="0 0 160 16"><path d="M2 7.500h6M146 7.500h9M150.500 3v9" stroke="#3b3a39" stroke-width="1.600"/><path d="M13 8.500h125M75.500 5v8" stroke="#605e5c" stroke-width="1"/><path d="M60 2h5.500v13H60z" fill="#605e5c"/></svg>
  <span class="pct">82%</span>
  <svg width="20" height="15" viewBox="0 0 20 15" fill="none" stroke="#605e5c" stroke-width="1.400"><path d="M1 1h18v13H1zM4 6V4h3M13 4h3v2M4 9v2h3M13 11h3V9"/></svg>
</footer>

<footer class="taskbar">
  <svg class="start" width="29" height="29" viewBox="0 0 29 29"><defs><linearGradient id="win" x2="1" y2="1"><stop offset="0" stop-color="#7ceef8"/><stop offset="1" stop-color="#0f94f0"/></linearGradient></defs><path fill="url(#win)" d="M0 1 1 0h13v14H0zM15 0h13l1 1v13H15zM0 15h14v14H1l-1-1zM15 15h14v13l-1 1H15z"/></svg>
  <div class="tsearch"><svg width="19" height="19"><use href="#i-lens"/></svg>Rechercher</div>
  <div class="apps">
    <div><svg viewBox="0 0 32 32"><path d="M8 2h22v20H8z" fill="#eee"/><path d="M1 10h21v19H1z" fill="#5e6265"/><path d="M8 10h14v12H8z" fill="#aaacad"/></svg></div>
    <div><svg viewBox="0 0 32 32"><use href="#t-teams"/></svg></div>
    <div><svg viewBox="0 0 32 32"><use href="#t-teams"/></svg></div>
    <div><svg viewBox="0 0 32 32"><rect x="1" y="1" width="30" height="30" rx="13" fill="#0b5cff"/><text x="16" y="19" class="zoomt">zoom</text></svg></div>
    <div><svg viewBox="0 0 32 32"><defs><linearGradient id="ff" x1=".8" x2=".3" y2="1"><stop offset="0" stop-color="#fff04a"/><stop offset=".45" stop-color="#ff9a1f"/><stop offset="1" stop-color="#f0154f"/></linearGradient></defs><path d="M5 6c1 2 2 3 4 3 3-1 6-5 10-8 0 3 2 5 4 6l1-3c4 5 7 8 7 14C30 26 24 31 16 31S1 25 1 17c0-4 1-8 4-11z" fill="url(#ff)"/><circle cx="16" cy="17" r="7" fill="#7a3ddb"/><path d="M5 9c3 3 7 0 11 3-2 2-5 1-6 5 2 4 8 5 11 1-1 6-8 8-12 4-3-3-4-8-4-13z" fill="#ff8a1e"/></svg></div>
    <div><svg viewBox="0 0 32 32"><path d="M9 2h20l2 2v24l-2 2H9z" fill="#2b7cd3"/><path d="M9 2h22v7H9z" fill="#41a5ee"/><path d="M9 16h22v7H9z" fill="#185abd"/><path d="M9 23h22v5l-2 2H9z" fill="#103f91"/><rect x="1" y="8" width="16" height="16" rx="1.500" fill="#185abd"/><text x="9" y="20.500" class="app">W</text></svg></div>
    <div><svg viewBox="0 0 32 32"><path d="M1 3h11l3 4h16v8H1z" fill="#e5a50a"/><path d="M1 9h12l3-3h15v24H1z" fill="#ffd04b"/><path d="M6 30c0-8 2-8 5-8h10c3 0 5 0 5 8z" fill="#1377c9"/><path d="M9 26h14" stroke="#0b4a85"/></svg><u></u></div>
    <div><svg viewBox="0 0 32 32"><path d="M8 2h22l1 1v26l-1 1H8z" fill="#107c41"/><path d="M8 2h11v8H8z" fill="#21a366"/><path d="M19 2h12v8H19z" fill="#33c481"/><path d="M19 10h12v7H19z" fill="#21a366"/><path d="M8 17h12v13H8z" fill="#185c37"/><rect x="1" y="8" width="15" height="16" rx="1.500" fill="#107c41"/><text x="8.500" y="20.500" class="app">X</text></svg></div>
    <div><svg viewBox="0 0 32 32"><circle cx="17" cy="16" r="14" fill="#ed6c47"/><path d="M17 2a14 14 0 0 1 14 14H17z" fill="#ff8f6b"/><path d="M31 16a14 14 0 0 1-27 4l13-4z" fill="#d35230"/><rect x="1" y="8" width="15" height="16" rx="1.500" fill="#c43e1c"/><text x="8.500" y="20.500" class="app">P</text></svg></div>
    <div><svg viewBox="0 0 32 32"><path d="M12 3h10v6h7l2 2v17l-2 2H5l-2-2V10l1-3h4l1 2h1z" fill="#29b2e8"/><circle cx="17" cy="18" r="6.500" fill="none" stroke="#123039" stroke-width="3"/></svg></div>
    <div><svg viewBox="0 0 32 32"><circle cx="16" cy="16" r="15" fill="#e33b2e"/><path d="M16 16 3 8.500A15 15 0 0 0 14 31z" fill="#2aa148"/><path d="M16 16h15a15 15 0 0 1-16 15z" fill="#fbc116"/><circle cx="16" cy="16" r="7.500" fill="#fff"/><circle cx="16" cy="16" r="6" fill="#1f74e8"/><circle cx="27" cy="5" r="10" fill="#0592a5"/><text x="27" y="9" class="hh">h</text></svg><u></u></div>
    <div class="act"><svg viewBox="0 0 32 32"><path d="M17 1h11v30H17z" fill="#d9960d"/><path d="M10 9h11v22H10z" fill="#f0c33a"/><path d="M4 16h11v15H4z" fill="#f9e07a"/></svg><u class="long"></u></div>
    <div><u></u></div>
  </div>
  <div class="weather"><svg width="31" height="30" viewBox="0 0 31 30"><circle cx="15" cy="16" r="13" fill="#f49318"/><path d="M4 12c-5 0-5-6 0-6 1-7 9-7 10-1 5 0 5 7 0 7zM16 27c-5 0-5-6 0-6 1-6 8-6 9-1 6 0 6 7 0 7z" fill="#c2d6f8"/></svg><p>17°C<br><span>Eclaircies</span></p></div>
  <div class="tray">
    <svg width="15" height="9" viewBox="0 0 15 9" class="wh"><path stroke-width="2" d="m1 8 6.500-7L14 8"/></svg>
    <svg width="22" height="22" viewBox="0 0 22 22" class="wh"><path d="M1 10C2 1 14-1 19 6M20 1v6h-6M8 21c-3-1-5-3-6-5M1 21v-6h6"/><circle cx="15.500" cy="16" r="5.300" fill="#ff9b08" stroke="none"/></svg>
    <svg width="20" height="16" viewBox="0 0 20 16" class="wh"><path d="M1 6c5-6 13-6 18 0M4 9c4-4 8-4 12 0M7 12c2-2 4-2 6 0"/><circle cx="10" cy="14" r="1.500" fill="#fff" stroke="none"/></svg>
    <svg width="21" height="18" viewBox="0 0 21 18" class="wh"><path d="M1 6h4l5-4v14l-5-4H1zM12.500 6c2 2 2 4 0 6M15 4c3 3 3 7 0 10M17.500 1.500c4 4 4 11 0 15"/></svg>
    <svg width="21" height="14" viewBox="0 0 21 14" class="wh"><rect x="1" y="1" width="16.500" height="12" rx="3"/><rect x="3.500" y="3.500" width="11" height="7" fill="#fff"/><path d="M19.500 5v4"/></svg>
  </div>
  <p class="clock">12:57<br>17/02/2025</p>
</footer>
</body>
</html>
```
FILE: styles.css
```css
* { box-sizing: border-box; }
body { margin: 0; width: 1918px; height: 1078px; overflow: hidden; display: flex; flex-direction: column; font-family: "Open Sans", "Noto Sans", sans-serif; font-size: 14.5px; letter-spacing: -.35px; color: #252423; background: #fff; }
h2, h6, p, ul { margin: 0; padding: 0; }
svg { flex: none; display: block; overflow: visible; }
.sprite { display: none; }
.wh { fill: none; stroke: #fff; stroke-width: 1.4; }
.dim { opacity: .35; }

/* icon paints */
.k { fill: none; stroke: #3b3a39; stroke-width: 1.4; }
.k2 { fill: none; stroke: #3b3a39; stroke-width: 1.8; }
.kd { fill: #3b3a39; }
.w { fill: #fff; stroke: #3b3a39; stroke-width: 1.4; }
.w2 { fill: #fafafa; stroke: #4a4947; stroke-width: 1.8; }
.w3 { fill: #fafafa; stroke: #8a8886; stroke-width: 1.6; }
.b { fill: #83beec; stroke: #1066b5; stroke-width: 1.4; }
.b0 { stroke: #1b78c0; stroke-width: 1.3; }
path.b0:not([fill]) { fill: none; }
.bs { fill: #83beec; }
.bl { fill: none; stroke: #1b78c0; stroke-width: 1.4; }
.bl2 { fill: none; stroke: #1b78c0; stroke-width: 1.9; }
.g { fill: #c8c6c4; stroke: #797775; stroke-width: 1.4; }
.gl { fill: none; stroke: #797775; stroke-width: 1.3; }
.o { fill: #f8b060; stroke: #dd6b08; }
.gn { fill: #2f9150; }
.bolt { fill: #fbd68a; stroke: #dd6b08; stroke-width: 1.3; }
.num { font-size: 11.5px; fill: #1b78c0; text-anchor: middle; letter-spacing: -.4px; }
.lang { font-size: 21px; font-weight: 700; fill: #2484c6; text-anchor: middle; letter-spacing: -.5px; }
.app { font-size: 13px; font-weight: 700; fill: #fff; text-anchor: middle; letter-spacing: 0; }
.bigA { font-size: 23px; fill: #1e88d2; text-anchor: middle; font-family: "Liberation Sans", sans-serif; }
.fx { font: italic 23px "Liberation Serif", serif; fill: #a5a4a3; text-anchor: middle; }
.dax { font-size: 9px; font-weight: 700; fill: #797775; letter-spacing: 0; }
.zoomt { font-size: 9px; font-weight: 700; fill: #fff; text-anchor: middle; letter-spacing: -.2px; }
.hh { font-size: 12px; fill: #fff; text-anchor: middle; }

.titlebar { height: 43px; flex: none; background: #3b3a37; color: #fff; display: flex; align-items: center; font-size: 14.5px; }
.quick { display: flex; gap: 19px; padding-left: 20px; width: 126px; margin-top: -1px; }
.doc { display: flex; align-items: center; width: 711px; padding-top: 6px; letter-spacing: -.09px; }
.doc i { font-style: normal; font-size: 15px; margin: 0 5px; }
.doc svg { margin-left: 8px; margin-top: -5px; }
.topsearch { width: 500px; height: 30px; margin-top: -1px; background: #d6d6d4; border-radius: 2px; display: flex; align-items: center; gap: 12px; padding-left: 21px; color: #24584f; font-size: 16.5px; letter-spacing: -.2px; }
.signin { margin-left: 316px; width: 57px; letter-spacing: -.25px; }
.avatar { margin-right: 40px; }
.winbtns { margin-top: 2px; }

.ribbon { height: 157px; flex: none; background: #fafafa; border-bottom: 1px solid #e1dfdd; box-shadow: 0 2px 5px rgba(0,0,0,.13); position: relative; z-index: 2; }
.menu { height: 38px; display: flex; align-items: center; font-size: 16.5px; letter-spacing: -.3px; padding-left: 12px; }
.menu a { height: 38px; display: flex; align-items: center; justify-content: center; border-bottom: 3px solid transparent; padding-top: 4px; white-space: nowrap; }
.menu b { font-weight: 700; letter-spacing: -.75px; }
.m-file { width: 58px; margin-right: 31px; }
.m-home { width: 48px; }
.m-insert { width: 43px; margin-left: 39px; }
.m-model { width: 113px; margin-left: 20px; background: #f5f4f3; }
.m-view { width: 50px; margin-left: 14px; }
.m-opt { width: 90px; margin-left: 22px; }
.m-help { width: 50px; margin-left: 22px; }
.menu a.on { border-bottom-color: #117865; }
.share { margin-left: auto; margin-right: 5px; margin-top: 1px; width: 105px; height: 30px; background: #117865; border: 0; border-radius: 5px; color: #fff; font: 500 14.5px "Open Sans", sans-serif; letter-spacing: -.35px; display: flex; align-items: center; gap: 5px; padding: 0 0 0 9px; }
.share span { margin-left: 5px; }
.groups { display: flex; height: 118px; padding-top: 7px; position: relative; }
.grp { height: 110px; border-right: 1px solid #d2d0ce; display: flex; flex-direction: column; }
.grp h6 { font-weight: 400; font-size: 12px; line-height: 18px; letter-spacing: -.3px; text-align: center; color: #3b3a39; margin-top: auto; margin-bottom: -3px; }
.btns { display: flex; padding-top: 7px; height: 90px; }
.btn { display: flex; flex-direction: column; align-items: center; text-align: center; line-height: 20px; white-space: nowrap; }
.btn > span { margin-top: 4px; }
.ic { width: 36px; height: 38px; }
.clip .ic { margin-left: 5px; }
.nudge { margin-left: 5px; }
.nudge2 { margin-left: 4px; }
.dn { display: inline-block; width: 8px; height: 6px; margin-left: 2px; vertical-align: 1px; }
.clip { width: 200.500px; padding-left: 10px; }
.clip h6 { padding-right: 9px; }
.data { width: 459px; padding-left: 10px; }
.data h6, .queries h6 { padding-right: 9px; }
.queries { width: 145px; padding-left: 11px; }
.insert { width: 511px; padding-left: 10px; }
.insert h6 { padding-right: 8px; }
.calc { width: 233px; padding-left: 11px; }
.calc h6 { padding-right: 10px; }
.sens { width: 92px; padding-left: 5px; }
.sens h6 { padding-right: 4px; }
.shr { width: 73px; padding-left: 6px; }
.shr h6, .cop h6 { padding-right: 5px; }
.cop { width: 74px; padding-left: 6px; }
.dis .btn, .btn.dis, .cliplist { color: #c4c2c0; }
.cliplist { display: flex; flex-direction: column; gap: 10px; margin-left: 5px; margin-top: -3px; letter-spacing: -.28px; }
.cliplist div { display: flex; align-items: center; height: 20px; gap: 4px; white-space: nowrap; }
.cliplist div:first-child { padding-left: 3px; gap: 7px; }
.gallery { width: 317px; height: 77px; margin: 1px 5px 0; border: 1px solid #8a8886; background: #fff; display: flex; }
.gal-grid { width: 297px; padding: 9px 0 0 8px; display: grid; grid-template-columns: repeat(9, 32.500px); grid-auto-rows: 37px; }
.gal-grid svg { width: 20px; height: 20px; }
.gal-more { flex: 1; border-left: 1px solid #8a8886; display: flex; align-items: center; justify-content: center; padding-top: 6px; padding-right: 2px; }
.collapse { position: absolute; right: 4px; bottom: 6px; }

.work { height: 790px; flex: none; display: flex; }
.rail { width: 51px; background: #f3f2f1; border-right: 1px solid #e1dfdd; }
.rail div { height: 50px; display: flex; align-items: center; padding: 0 0 2px 15px; border-left: 0 solid #117865; }
.rail div:nth-child(3), .rail div:nth-child(4) { padding-left: 13px; }
.rail div.on { border-left-width: 3px; padding-left: 13px; padding-bottom: 0; }
.center { width: 1376px; display: flex; flex-direction: column; }
.upper { height: 746px; display: flex; }
.canvas { width: 1336px; border-right: 1px solid #a19f9d; }
.filters { width: 40px; display: flex; flex-direction: column; align-items: center; padding-top: 15px; }
.filters .flip { transform: scaleX(-1); margin-bottom: 19px; }
.filters svg + svg { margin-left: 6px; }
.filters span { writing-mode: vertical-rl; font-weight: 600; font-size: 18.5px; line-height: 20px; letter-spacing: -.2px; margin-top: 9px; }
.frame path { fill: none; stroke: #605e5c; stroke-width: 2; stroke-dasharray: 2 2; }
.din { font: 400 16.5px Roboto, sans-serif; letter-spacing: 0; fill: #252423; }
.dinx { font: 400 13.500px Roboto, sans-serif; letter-spacing: 0; fill: #252423; text-anchor: middle; }
.map polygon { stroke: #7d7d7d; stroke-width: 3; stroke-linejoin: round; }
.legend { font-size: 13.500px; fill: #605e5c; letter-spacing: 0; }
.legend .lt { font-weight: 700; }
.grid { fill: none; stroke: #c8c6c4; stroke-width: 1; stroke-dasharray: 1 4; }
.ax { font-size: 12px; fill: #605e5c; letter-spacing: -.35px; }
.end { text-anchor: end; }
.mid { text-anchor: middle; }
.series polyline { fill: none; stroke-width: 9.300; stroke-linejoin: round; stroke-linecap: round; }

.pages { height: 44px; display: flex; background: #f3f2f1; border-bottom: 1px solid #e1dfdd; }
.viewctl { width: 160px; border-right: 1px solid #a19f9d; display: flex; align-items: flex-start; }
.desk { margin: 9px 0 0 12.500px; width: 30px; height: 29px; display: flex; justify-content: center; border-bottom: 3px solid #117865; }
.phone { margin: 5px 0 0 31px; }
.pn { margin: 15px 0 0 26px; }
.pg { background: #fff; border-right: 1px solid #bebbb8; display: flex; align-items: center; justify-content: center; padding: 2px 2px 0 0; position: relative; font-size: 14.5px; letter-spacing: -.25px; white-space: nowrap; }
.pg.on { font-weight: 700; border-bottom: 5px solid #117865; padding-top: 7px; letter-spacing: -.65px; }
.pg i { position: absolute; right: 5px; top: 1px; font-style: normal; }
.add { width: 49px; background: #117865; display: flex; align-items: center; justify-content: center; padding-bottom: 3px; }

.build, .fields { background: #f3f2f1; border-left: 1px solid #e1dfdd; border-bottom: 1px solid #e1dfdd; }
.build { width: 226px; padding-left: 10px; }
.fields { width: 227px; }
.phead { height: 46px; display: flex; align-items: center; padding-top: 2px; }
.phead h2 { font-size: 19px; font-weight: 600; letter-spacing: -.2px; width: 160px; padding-top: 2px; }
.phead svg { margin: -3px 0 0 8px; }
.dots { font-size: 22px; line-height: 16px; letter-spacing: .8px; width: 22px; margin-top: -3px; font-weight: 400; }
.sug { font-size: 14px; height: 26px; line-height: 24px; letter-spacing: -.1px; }
.visuals { width: 205px; height: 267px; border: 1px solid #8a8886; border-radius: 2px; background: #fff; display: grid; grid-template-columns: repeat(6, 32.400px); grid-auto-rows: 32.500px; padding: 7px 0 0 9px; }
.visuals svg { width: 23px; height: 23px; }
.visuals .dots { margin-top: 1px; }
.dlabel { height: 35px; line-height: 41px; font-size: 14px; }
.drop { width: 205px; height: 49px; border: 1px dashed #3b3a39; padding: 5px; }
.drop button { width: 100%; height: 37px; background: #fff; border: 1px solid #605e5c; border-radius: 2px; font: 600 13.500px "Open Sans", sans-serif; letter-spacing: 0; color: #252423; padding: 0; }
.fields .phead { padding-left: 10px; }
.fields .phead h2 { width: 160px; }
.fsearch { margin: 11px 0 11px 5.500px; width: 214px; height: 30px; background: #fff; border: 1px solid #d2d0ce; border-bottom: 1.500px solid #605e5c; border-radius: 4px; display: flex; align-items: center; gap: 8px; padding: 2px 0 0 14px; font-size: 16.300px; letter-spacing: -.2px; color: #797775; }
.fields ul { list-style: none; }
.fields li { height: 30px; display: flex; align-items: center; padding-left: 19px; font-size: 14.400px; letter-spacing: -.3px; color: #3b3a39; white-space: nowrap; }
.fields .c { width: 9px; height: 14px; margin-right: 7px; }
.fields .t { width: 17px; height: 17px; margin-right: 7px; }
.panes { width: 38px; background: #faf9f8; border-left: 1px solid #e1dfdd; border-bottom: 1px solid #e1dfdd; display: flex; flex-direction: column; }
.panes div { height: 40px; display: flex; align-items: center; justify-content: center; padding-top: 1px; }
.panes svg { width: 22px; height: 22px; }
.panes .on { background: #e1dfdd; border: 1px solid #797775; }
.panes .gear { margin-top: auto; border-top: 1px solid #e1dfdd; }
.panes .gear svg { width: 25px; height: 25px; }

.status { height: 29px; flex: none; background: #f3f2f1; display: flex; align-items: center; font-size: 14.300px; color: #484644; padding-left: 5px; }
.pgno { width: 1649px; padding-top: 3px; }
.pct { width: 54px; margin-left: 10px; color: #605e5c; }

.taskbar { height: 59px; flex: none; background: linear-gradient(90deg, #162832, #14262f 10%, #13262f 60%, #122a2e); border-top: 1px solid #000; display: flex; align-items: center; color: #fff; padding-top: 3px; }
.start { margin: 0 18px 0 26px; }
.tsearch { width: 273px; height: 38px; background: #f3f4f5; border-radius: 19px; display: flex; align-items: center; gap: 12px; padding-left: 14px; color: #605e5c; font-size: 16.500px; letter-spacing: -.15px; margin-top: -1px; }
.tsearch svg { color: #252423; }
.apps { display: flex; margin-left: 4px; margin-top: -1px; }
.apps div { width: 54.900px; height: 50px; display: flex; justify-content: center; padding-top: 9px; position: relative; }
.apps svg { width: 30px; height: 30px; }
.apps u { position: absolute; bottom: 1px; left: 24px; width: 8px; height: 4px; border-radius: 2px; background: #9a9da0; }
.apps u.long { left: 19px; width: 18px; background: #4cc2ff; }
.apps .act { background: linear-gradient(#25363f, #25363f) center / 49px 50px no-repeat; }
.weather { display: flex; margin-left: 374px; width: 203px; gap: 8px; align-items: center; margin-top: -2px; }
.weather p, .clock { font-size: 14.500px; line-height: 20px; letter-spacing: -.1px; }
.weather span { color: #cfd4d6; }
.tray { display: flex; align-items: center; width: 160px; }
.tray svg:nth-child(2) { margin-left: 22px; }
.tray svg:nth-child(3) { margin-left: 18px; }
.tray svg:nth-child(4) { margin-left: 10px; }
.tray svg:nth-child(5) { margin-left: 10px; }
.clock { margin-left: auto; margin-right: 22px; margin-top: -2px; text-align: right; letter-spacing: -.15px; }
```
